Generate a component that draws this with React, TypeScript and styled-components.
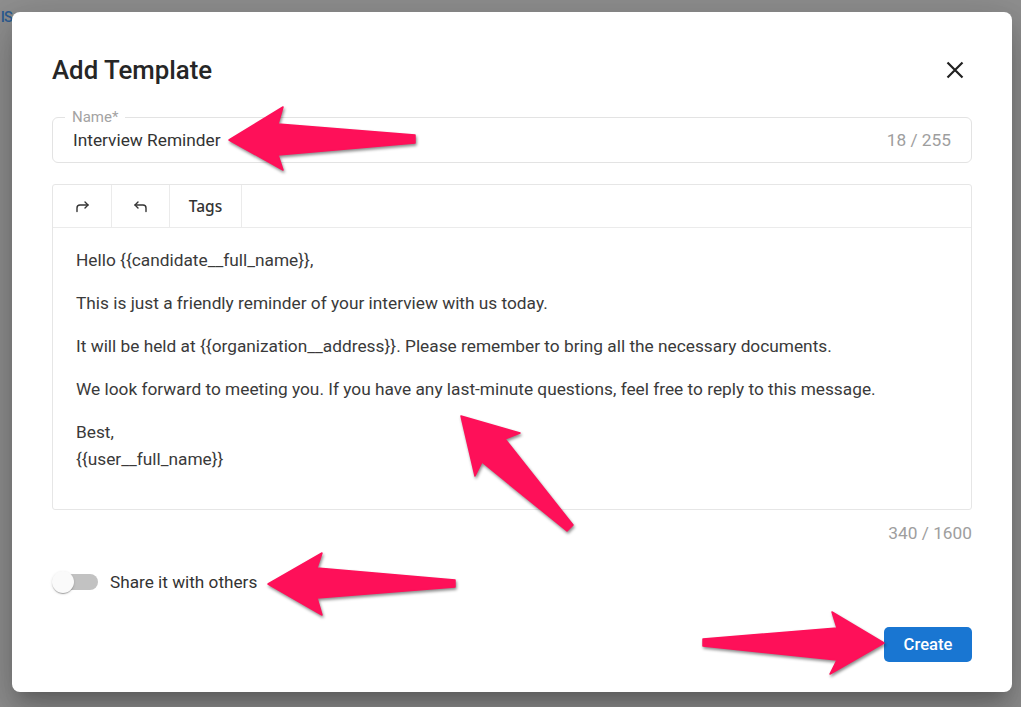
import React from 'react'
import styled, { createGlobalStyle } from 'styled-components'

const GlobalStyle = createGlobalStyle`
  html, body {
    margin: 0;
    height: 100%;
  }
  body {
    background: #8f8f8f;
    font-family: Roboto, "Liberation Sans", sans-serif;
    overflow: hidden;
  }
  #root {
    height: 100%;
  }
`

const Page = styled.div`
  position: relative;
  display: flex;
  align-items: flex-start;
  height: 707px;
  padding-top: 12px;
  box-sizing: border-box;
`

const PeekText = styled.div`
  width: 12px;
  display: flex;
  justify-content: flex-end;
  margin-top: -2px;
  font: 500 14.5px/16px Roboto, sans-serif;
  letter-spacing: -0.8px;
  color: #2b5c93;
  white-space: nowrap;
`

const Dialog = styled.div`
  width: 1000px;
  height: 680px;
  box-sizing: border-box;
  background: #fff;
  border-radius: 8px;
  padding: 42px 40px 30px;
  display: flex;
  flex-direction: column;
  box-shadow: 0 11px 15px -7px rgba(0, 0, 0, 0.2), 0 24px 38px 3px rgba(0, 0, 0, 0.14),
    0 9px 46px 8px rgba(0, 0, 0, 0.12);
`

const TitleRow = styled.div`
  display: flex;
  align-items: center;
  justify-content: space-between;
  height: 32px;
`

const Title = styled.h2`
  margin: 0;
  font: 500 25.8px/32px Roboto, sans-serif;
  color: #262626;
`

const CloseButton = styled.button`
  display: flex;
  align-items: center;
  justify-content: center;
  width: 26px;
  height: 26px;
  margin-right: 4px;
  padding: 0;
  border: 0;
  background: none;
  color: #222;
`

const NameField = styled.div`
  position: relative;
  margin-top: 31px;
  height: 46px;
  box-sizing: border-box;
  border: 1px solid #e3e3e3;
  border-radius: 6px;
  padding: 0 20px;
  display: flex;
  align-items: center;
  justify-content: space-between;
  font-size: 17.3px;
  color: #333;
`

const FieldLabel = styled.span`
  position: absolute;
  top: -9px;
  left: 12px;
  padding: 0 7px;
  background: #fff;
  font: 15px/16px Roboto, sans-serif;
  color: #a3a3a3;
`

const Count = styled.span`
  color: #9e9e9e;
  font-size: 17.3px;
`

const Editor = styled.div`
  margin-top: 21px;
  height: 326px;
  box-sizing: border-box;
  border: 1px solid #e6e6e6;
  border-radius: 3px;
  display: flex;
  flex-direction: column;
`

const Toolbar = styled.div`
  display: flex;
  height: 42px;
  flex-shrink: 0;
  border-bottom: 1px solid #ebebeb;
`

const ToolButton = styled.button<{ $width: number }>`
  width: ${p => p.$width}px;
  display: flex;
  align-items: center;
  justify-content: center;
  padding: 0;
  border: 0;
  border-right: 1px solid #ebebeb;
  background: none;
  color: #333;
  font: 500 15.5px "Noto Sans", sans-serif;
`

const Content = styled.div`
  flex: 1;
  padding: 19px 23px;
  font-size: 17.3px;
  line-height: 27px;
  color: #3a3a3a;

  p {
    margin: 0 0 16px;
  }
`

const Counter = styled.div`
  margin-top: 11px;
  text-align: right;
  line-height: 24px;
  font-size: 17.3px;
  color: #9e9e9e;
`

const SwitchRow = styled.label`
  margin-top: 25px;
  display: flex;
  align-items: center;
  gap: 12px;
  height: 24px;
  font-size: 17.2px;
  color: #333;
`

const Switch = styled.span`
  position: relative;
  width: 46px;
  height: 24px;
  flex-shrink: 0;
`

const Track = styled.span`
  position: absolute;
  left: 6px;
  right: 0;
  top: 4px;
  height: 16px;
  border-radius: 8px;
  background: #c2c2c2;
`

const Thumb = styled.span`
  position: absolute;
  left: 0;
  top: 1px;
  width: 22px;
  height: 22px;
  border-radius: 50%;
  background: #fafafa;
  box-shadow: 0 2px 1px -1px rgba(0, 0, 0, 0.2), 0 1px 1px rgba(0, 0, 0, 0.14),
    0 1px 3px rgba(0, 0, 0, 0.12);
`

const Footer = styled.div`
  margin-top: auto;
  display: flex;
  justify-content: flex-end;
`

const PrimaryButton = styled.button`
  width: 88px;
  height: 35px;
  border: 0;
  border-radius: 5px;
  background: #1976d2;
  color: #fff;
  font: 500 16.6px Roboto, sans-serif;
`

const Annotations = styled.svg`
  position: absolute;
  left: 0;
  top: 0;
  width: 1021px;
  height: 707px;
  pointer-events: none;
  filter: drop-shadow(1px 2px 1.5px rgba(0, 0, 0, 0.45));
`

const arrows = [
  '229,140 283,107 278,124 415,135 415,143 278,155 283,170',
  '461,416 520,433 505,439 573,525 567,531 482,462 475,476',
  '268,584 322,553 317,568 455,580 455,587 317,598 322,615',
  '884,643 832,612 837,628 703,639 703,646 837,660 830,674',
]

const RedoIcon = () => (
  <svg width="16" height="14" viewBox="0 0 16 14" fill="none" stroke="currentColor" strokeWidth="1.4" strokeLinecap="round" strokeLinejoin="round">
    <path d="M3 12.5V9a3 3 0 0 1 3-3h8" />
    <path d="M11 3l3 3-3 3" />
  </svg>
)

const UndoIcon = () => (
  <svg width="16" height="14" viewBox="0 0 16 14" fill="none" stroke="currentColor" strokeWidth="1.4" strokeLinecap="round" strokeLinejoin="round">
    <path d="M13 12.5V9a3 3 0 0 0-3-3H2" />
    <path d="M5 3L2 6l3 3" />
  </svg>
)

export default function App() {
  return (
    <Page>
      <GlobalStyle />
      <PeekText>IS</PeekText>
      <Dialog>
        <TitleRow>
          <Title>Add Template</Title>
          <CloseButton aria-label="Close">
            <svg width="18" height="18" viewBox="0 0 18 18" stroke="currentColor" strokeWidth="2.2">
              <path d="M1.5 1.5l15 15M16.5 1.5l-15 15" />
            </svg>
          </CloseButton>
        </TitleRow>

        <NameField>
          <FieldLabel>Name*</FieldLabel>
          <span>Interview Reminder</span>
          <Count>18 / 255</Count>
        </NameField>

        <Editor>
          <Toolbar>
            <ToolButton $width={59}><RedoIcon /></ToolButton>
            <ToolButton $width={58}><UndoIcon /></ToolButton>
            <ToolButton $width={72}>Tags</ToolButton>
          </Toolbar>
          <Content>
            <p>Hello {'{{candidate__full_name}}'},</p>
            <p>This is just a friendly reminder of your interview with us today.</p>
            <p>It will be held at {'{{organization__address}}'}. Please remember to bring all the necessary documents.</p>
            <p>We look forward to meeting you. If you have any last-minute questions, feel free to reply to this message.</p>
            <p>
              Best,
              <br />
              {'{{user__full_name}}'}
            </p>
          </Content>
        </Editor>
        <Counter>340 / 1600</Counter>

        <SwitchRow>
          <Switch>
            <Track />
            <Thumb />
          </Switch>
          Share it with others
        </SwitchRow>

        <Footer>
          <PrimaryButton>Create</PrimaryButton>
        </Footer>
      </Dialog>

      <Annotations viewBox="0 0 1021 707">
        {arrows.map(points => (
          <polygon key={points} points={points} fill="#fe1059" stroke="#fe1059" strokeWidth="1.5" strokeLinejoin="round" />
        ))}
      </Annotations>
    </Page>
  )
}
